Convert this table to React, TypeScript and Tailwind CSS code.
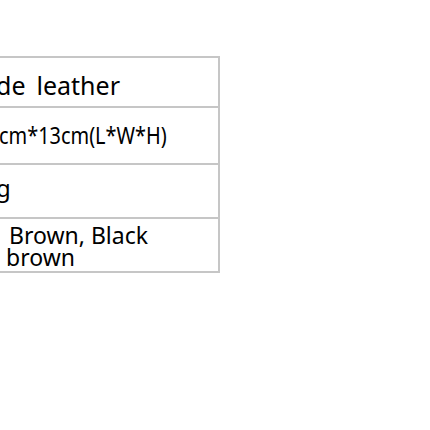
const font = { fontFamily: '"Noto Sans", "Open Sans", sans-serif' };

export default function App() {
  return (
    <div className="w-[430px] h-[430px] bg-white overflow-hidden" style={font}>
      <div className="w-[220px] pt-[56px]">
        <div className="border-t-2 border-r-2 border-[#c6c6c6] text-black overflow-hidden">
          {/* material */}
          <div className="h-[50px] border-b-2 border-[#c6c6c6] pt-[15px] text-[25px] leading-[24px] whitespace-nowrap flex">
            <span className="-ml-[4px]">de</span>
            <span className="ml-[11px]">leather</span>
          </div>
          {/* size */}
          <div className="h-[57px] border-b-2 border-[#c6c6c6] pt-[15px] text-[24px] leading-[24px] whitespace-nowrap">
            <div className="origin-left scale-x-[0.83] -ml-[1px]">cm*13cm(L*W*H)</div>
          </div>
          {/* weight */}
          <div className="h-[54px] border-b-2 border-[#c6c6c6] pt-[11px] text-[24px] leading-[24px] -ml-[4px]">
            g
          </div>
          {/* colour */}
          <div className="h-[54px] border-b-2 border-[#c6c6c6] pt-[5px] text-[23px] leading-[22px]">
            <div className="pl-[9px]">Brown, Black</div>
            <div className="pl-[6px]">brown</div>
          </div>
        </div>
      </div>
    </div>
  );
}
